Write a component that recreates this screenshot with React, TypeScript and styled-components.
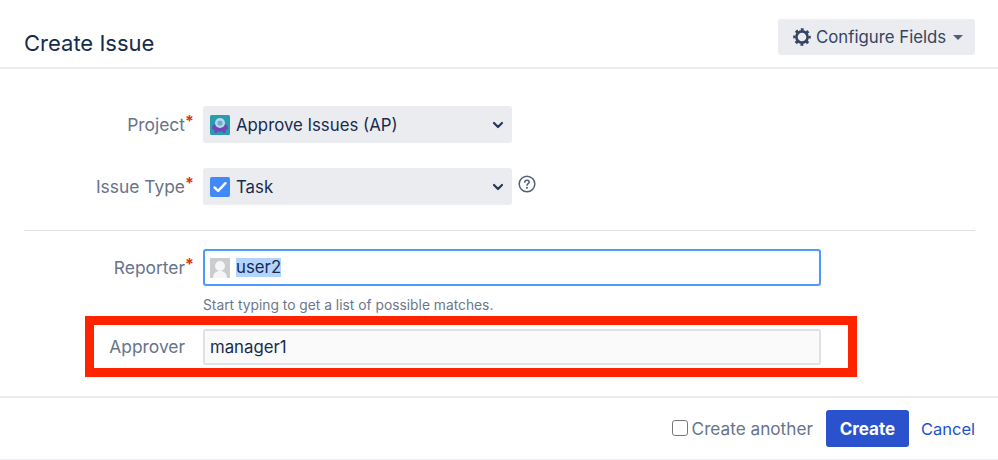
import React from 'react';
import styled, { createGlobalStyle } from 'styled-components';

const GlobalStyle = createGlobalStyle`
  html, body {
    margin: 0;
    padding: 0;
    background: #fff;
    font-family: Inter, "Liberation Sans", sans-serif;
  }
`;

const Dialog = styled.div`
  width: 998px;
  height: 460px;
  display: flex;
  flex-direction: column;
  overflow: hidden;
  background: #fff;
`;

const Header = styled.header`
  flex: none;
  height: 48px;
  display: flex;
  justify-content: space-between;
  padding: 19px 23px 0 24px;
  border-bottom: 2px solid #ebecf0;
`;

const Title = styled.h2`
  margin: 0;
  padding-top: 9px;
  font-size: 22px;
  line-height: 30px;
  font-weight: 400;
  color: #172b4d;
`;

const ConfigureButton = styled.button`
  width: 197px;
  height: 36px;
  display: flex;
  align-items: center;
  gap: 5px;
  padding: 0 0 0 15px;
  border: 0;
  border-radius: 3px;
  background: #ebecf0;
  color: #344563;
  font: 400 16.8px Inter, "Liberation Sans", sans-serif;
`;

const Caret = styled.span`
  margin-left: 2px;
  width: 0;
  height: 0;
  border-left: 5px solid transparent;
  border-right: 5px solid transparent;
  border-top: 5px solid #505f79;
`;

const Form = styled.div`
  flex: 1;
  padding-top: 37px;
  display: flex;
  flex-direction: column;
`;

const Row = styled.div<{ $gap?: number }>`
  display: flex;
  align-items: center;
  margin-bottom: ${(p) => p.$gap ?? 0}px;
`;

const Label = styled.label`
  width: 185px;
  flex: none;
  text-align: right;
  font-size: 17.4px;
  line-height: 24px;
  color: #67748a;
  position: relative;
`;

const Required = styled.span`
  position: absolute;
  left: 185px;
  top: -4px;
  color: #de350b;
  font-size: 16px;
  font-weight: 700;
`;

const Select = styled.div`
  width: 309px;
  height: 37px;
  margin-left: 18px;
  padding: 0 8px 0 7px;
  box-sizing: border-box;
  display: flex;
  align-items: center;
  gap: 6px;
  border-radius: 3px;
  background: #ebecf0;
  color: #172b4d;
  font-size: 16.8px;
`;

const SelectText = styled.span`
  flex: 1;
`;

const HelpIcon = styled.svg`
  margin-left: 6px;
  position: relative;
  top: -3px;
`;

const Divider = styled.hr`
  margin: 25px 23px 18px 24px;
  border: 0;
  border-top: 1px solid #dfe1e6;
`;

const TextInput = styled.div<{ $focused?: boolean }>`
  width: 618px;
  height: ${(p) => (p.$focused ? 37 : 36)}px;
  margin-left: 18px;
  padding: 0 5px;
  box-sizing: border-box;
  display: flex;
  align-items: center;
  gap: 6px;
  border-radius: 3px;
  border: 2px solid ${(p) => (p.$focused ? '#4c9aff' : '#dfe1e6')};
  background: ${(p) => (p.$focused ? '#fff' : '#fafafb')};
  color: #172b4d;
  font-size: 16.8px;
`;

const Selected = styled.span`
  background: #b3d4ff;
  line-height: 19px;
`;

const Hint = styled.div`
  margin: 10px 0 0 203px;
  font-size: 13.8px;
  line-height: 18px;
  color: #6b778c;
`;

const Highlight = styled.div`
  width: 772px;
  height: 61px;
  margin: 2px 0 0 85px;
  box-sizing: border-box;
  border: 9px solid #ff2400;
  display: flex;
  align-items: center;
`;

const HighlightLabel = styled(Label)`
  width: 91px;
`;

const Footer = styled.footer`
  flex: none;
  height: 61px;
  display: flex;
  align-items: center;
  justify-content: flex-end;
  padding: 0 23px 0 0;
  border-top: 2px solid #ebecf0;
  border-bottom: 1px solid #ebecf0;
`;

const CheckLabel = styled.label`
  display: flex;
  align-items: center;
  gap: 4px;
  font-size: 17.2px;
  color: #67748a;
`;

const CheckBox = styled.span`
  width: 16px;
  height: 16px;
  box-sizing: border-box;
  border: 1px solid #767676;
  border-radius: 3px;
  background: #fff;
  position: relative;
  top: -1px;
`;

const CreateButton = styled.button`
  width: 83px;
  height: 37px;
  margin-left: 13px;
  border: 0;
  border-radius: 3px;
  background: #2952cc;
  color: #fff;
  font: 700 17px Inter, "Liberation Sans", sans-serif;
`;

const CancelLink = styled.a`
  margin-left: 12px;
  font-size: 16.5px;
  color: #2152cc;
`;

const GearIcon = () => (
  <svg width="18" height="18" viewBox="0 0 18 18" fill="none">
    <circle cx="9" cy="9" r="5.6" stroke="#344563" strokeWidth="2.6" />
    <circle cx="9" cy="9" r="7.6" stroke="#344563" strokeWidth="2.4" strokeDasharray="2.9 3.07" strokeDashoffset="1.45" />
  </svg>
);

const Chevron = () => (
  <svg width="12" height="8" viewBox="0 0 12 8" fill="none">
    <path d="M2 2l4 4 4-4" stroke="#253858" strokeWidth="2.2" strokeLinecap="round" strokeLinejoin="round" />
  </svg>
);

const ProjectIcon = () => (
  <svg width="20" height="20" viewBox="0 0 20 20">
    <rect width="20" height="20" rx="1.5" fill="#2a9cb0" />
    <ellipse cx="10" cy="12.5" rx="8" ry="4.2" fill="#7049b8" />
    <circle cx="10" cy="8" r="5" fill="#b5dbe8" />
    <circle cx="10" cy="8" r="2.6" fill="#7ba6d4" />
    <rect x="4.5" y="16" width="2.5" height="2" fill="#7049b8" />
    <rect x="13" y="16" width="2.5" height="2" fill="#7049b8" />
  </svg>
);

const TaskIcon = () => (
  <svg width="20" height="20" viewBox="0 0 20 20">
    <rect width="20" height="20" rx="2" fill="#4188f8" />
    <path d="M4.5 10.5l3.7 3.4L15.5 6.2" fill="none" stroke="#fff" strokeWidth="2.4" strokeLinecap="round" strokeLinejoin="round" />
  </svg>
);

const AvatarIcon = () => (
  <svg width="20" height="20" viewBox="0 0 20 20">
    <rect width="20" height="20" fill="#cbcccd" />
    <circle cx="10" cy="8" r="5" fill="#f6f6f6" />
    <path d="M3 20c.5-5 3-7 7-7s6.5 2 7 7z" fill="#f6f6f6" />
  </svg>
);

export default function App() {
  return (
    <Dialog>
      <GlobalStyle />
      <Header>
        <Title>Create Issue</Title>
        <ConfigureButton>
          <GearIcon />
          Configure Fields
          <Caret />
        </ConfigureButton>
      </Header>
      <Form>
        <Row $gap={25}>
          <Label>
            Project<Required>*</Required>
          </Label>
          <Select>
            <ProjectIcon />
            <SelectText>Approve Issues (AP)</SelectText>
            <Chevron />
          </Select>
        </Row>
        <Row>
          <Label>
            Issue Type<Required>*</Required>
          </Label>
          <Select>
            <TaskIcon />
            <SelectText>Task</SelectText>
            <Chevron />
          </Select>
          <HelpIcon width="18" height="18" viewBox="0 0 18 18" fill="none">
            <circle cx="9" cy="9" r="7.8" stroke="#505f79" strokeWidth="1.5" />
            <path d="M6.8 7.2c0-1.3 1-2 2.2-2s2.2.8 2.2 1.9c0 1.6-2.2 1.6-2.2 3.2" stroke="#505f79" strokeWidth="1.5" strokeLinecap="round" />
            <circle cx="9" cy="12.8" r="1" fill="#505f79" />
          </HelpIcon>
        </Row>
        <Divider />
        <Row>
          <Label>
            Reporter<Required>*</Required>
          </Label>
          <TextInput $focused>
            <AvatarIcon />
            <Selected>user2</Selected>
          </TextInput>
        </Row>
        <Hint>Start typing to get a list of possible matches.</Hint>
        <Highlight>
          <HighlightLabel>Approver</HighlightLabel>
          <TextInput>manager1</TextInput>
        </Highlight>
      </Form>
      <Footer>
        <CheckLabel>
          <CheckBox />
          Create another
        </CheckLabel>
        <CreateButton>Create</CreateButton>
        <CancelLink>Cancel</CancelLink>
      </Footer>
    </Dialog>
  );
}
